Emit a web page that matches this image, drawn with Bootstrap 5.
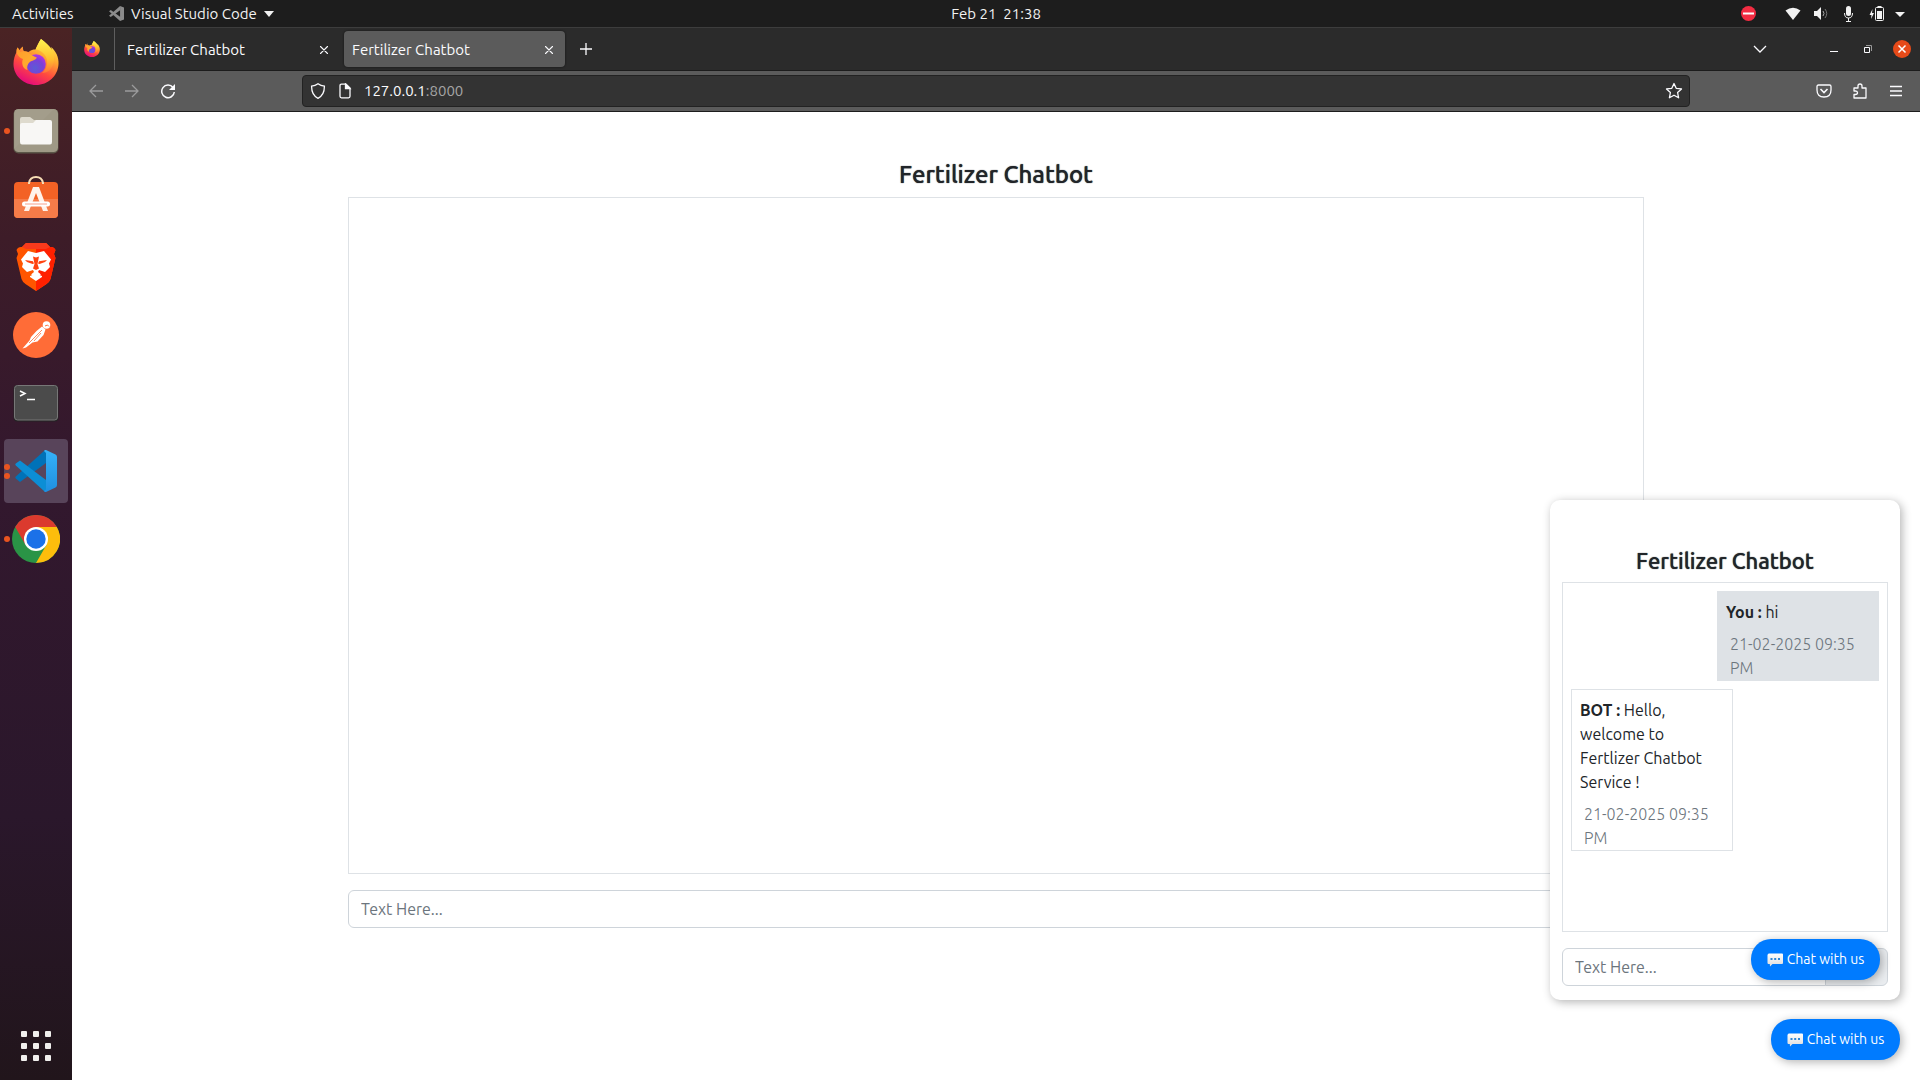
<!DOCTYPE html>
<html lang="en">
<head>
<meta charset="utf-8">
<meta name="viewport" content="width=device-width, initial-scale=1">
<title>Fertilizer Chatbot</title>
<link href="https://cdn.jsdelivr.net/npm/bootstrap@5.3.0/dist/css/bootstrap.min.css" rel="stylesheet">
<style>
  body { font-family: Ubuntu, "Noto Sans", "Open Sans", sans-serif; font-size: 16px; line-height: 24px; color: #212529; }
  svg { display: block; flex: none; }
  button.plain { background: none; border: 0; padding: 0; color: inherit; display: flex; align-items: center; justify-content: center; flex: none; }
  .topbar { height: 28px; background: #1d1d1d; border-bottom: 1px solid #3d3d3d; color: #f2f2f2; font-size: 15px; line-height: 27px; flex: none; }
  .topbar-rest { display: grid; grid-template-columns: 1fr auto 1fr; flex: 1; }
  .activities { width: 72px; padding-left: 12px; white-space: nowrap; }
  .app-menu { padding-left: 37px; gap: 7px; white-space: nowrap; }
  .tray { padding-right: 15px; }
  .dock { width: 72px; flex: none; padding: 3px 4px 2px; gap: 4px; background: linear-gradient(#4a2324, #3d1c28 20%, #33182e 42%, #2a172b 75%, #21151b); }
  .dock-item { width: 64px; height: 64px; border-radius: 4px; position: relative; }
  .dock-item.current { background: #58445a; }
  .dots { position: absolute; left: 0; top: 0; height: 100%; gap: 3px; }
  .dots i { width: 6px; height: 6px; border-radius: 50%; background: #e95420; display: block; }
  .tabstrip { height: 43px; background: #2b2b2b; border-bottom: 1px solid #1c1c1c; color: #fbfbfe; font-size: 15px; padding-right: 1px; }
  .pinned { width: 43px; height: 42px; border-right: 1px solid #5f5f5f; padding-right: 3px; }
  .tab-box { width: 221px; height: 36px; border-radius: 4px; padding: 2px 8px 0; margin-left: 4px; }
  .tab-box.active { background: #5b5b5b; box-shadow: 0 0 2px #111; }
  .tab-box button { width: 16px; height: 16px; }
  .wide-btn { width: 34px; height: 32px; }
  .tabs-menu { margin-right: 40px; }
  .toolbar { height: 41px; background: #5b5b5b; border-bottom: 1px solid #1c1c1c; color: #fbfbfe; padding: 0 6px; }
  .tool-btn { width: 36px; height: 32px; }
  .faded { opacity: .4; }
  .spring { flex: 13 1 0; }
  .urlbar { flex: 154 1 0; height: 32px; background: #333; border: 1px solid #222; border-radius: 4px; font-size: 15px; padding: 0 6px 0 7px; gap: 9px; }
  .urlbar .port { color: #a5a5a5; }
  .page-view { background: #fff; position: relative; overflow: hidden; min-height: 0; }
  .page-title { font-size: 24px; line-height: 29px; font-weight: 500; text-shadow: 0 0 1px #212529; }
  .chat-log { height: calc((100vh - 113px) * .7); border: 1px solid #dee2e6; }
  .form-control, .form-control:focus { font-size: 16px; height: 38px; border-color: #ced4da; }
  .form-control::placeholder { color: #6c757d; }
  .send-btn { width: 63px; background: #e9ecef; border: 1px solid #ced4da; }
  .chat-panel { position: absolute; z-index: 10; right: 20px; bottom: 80px; width: 350px; height: 500px; background: #fff; border-radius: 10px; box-shadow: 2px 2px 10px rgba(0,0,0,.3); padding: 48px 12px 0; }
  .chat-panel .page-title { font-size: 22px; line-height: 26px; }
  .panel-log { height: 350px; border: 1px solid #dee2e6; padding: 8px 0; gap: 8px; }
  .bubble { border: 1px solid #dee2e6; padding: 8px 8px 0; }
  .bubble.mine { background: #dee2e6; }
  .stamp { color: #6c757d; font-weight: 300; }
  .chat-btn { position: absolute; z-index: 10; right: 20px; bottom: 20px; height: 41px; width: 129px; border: 0; border-radius: 20px; background: #007bff; color: #fff; font-size: 14px; line-height: 21px; box-shadow: 2px 2px 10px rgba(0,0,0,.3); gap: 4px; white-space: nowrap; }
</style>
<script src="https://cdn.jsdelivr.net/npm/bootstrap@5.3.0/dist/js/bootstrap.bundle.min.js"></script>
</head>
<body class="d-flex flex-column vh-100 overflow-hidden">
<svg width="0" height="0" class="position-absolute" aria-hidden="true">
  <defs>
    <linearGradient id="ffBody" x1=".8" y1="0" x2=".3" y2="1"><stop offset="0" stop-color="#fff44f"/><stop offset=".35" stop-color="#ffa930"/><stop offset=".65" stop-color="#ff4a3f"/><stop offset="1" stop-color="#e3067f"/></linearGradient>
    <linearGradient id="ffFlame" x1=".5" y1="0" x2=".5" y2="1"><stop offset="0" stop-color="#fff44f"/><stop offset=".6" stop-color="#ffbd2f"/><stop offset="1" stop-color="#ff7139"/></linearGradient>
    <radialGradient id="ffGlobe" cx=".45" cy=".7" r=".7"><stop offset="0" stop-color="#5b5bd6"/><stop offset=".6" stop-color="#7b40d8"/><stop offset="1" stop-color="#b833e1"/></radialGradient>
    <linearGradient id="ffFox" x1="0" y1="0" x2="1" y2="1"><stop offset="0" stop-color="#ff9a2b"/><stop offset=".6" stop-color="#ffab2e"/><stop offset="1" stop-color="#ff7a35"/></linearGradient>
    <symbol id="firefox" viewBox="0 0 46 46">
      <path d="M28 0c5 3.500 8 7.500 9.500 11.500C39 11 38.500 9 38 8c5 4 8 10.500 7.500 17C45 37 35 46 23 46S.5 37 .5 25C.5 20 2 16 3.500 13c0-1.500.2-3 .8-4.500 1 .8 1.700 1.800 2.200 2.800C7.500 9.500 8.500 8.500 10 7.500c-.3 2 .2 3.500 1 4.700 1.500-.1 3 .1 4.500.7C18 11 20 10.500 22.500 10.500 24 7 25.500 4 28 0z" fill="url(#ffBody)"/>
      <circle cx="23" cy="25" r="9.800" fill="url(#ffGlobe)"/>
      <path d="M28 0c8 6 14 11 13 21-1 9-6 13-12 13 6-5 7-13 2-19-3-3.500-7-5-8.500-4.500C24 7 25.500 4 28 0z" fill="url(#ffFlame)"/>
      <path d="M4.300 8.500c2 1.500 2.700 3.500 3 4.500 3-1.500 6.500-1 9 1.500 2 1.500 5 3 7.500 4-1 3-5 3-7 4.500-2.500 2-3 5-2.300 8C10 30 8 24 10 20c-3-1-6-4-6.500-7 0-1.500.2-3 .8-4.500z" fill="url(#ffFox)"/>
    </symbol>
    <linearGradient id="vsRight" x1="0" y1="0" x2="0" y2="1"><stop offset="0" stop-color="#35b2f8"/><stop offset="1" stop-color="#1f8fe0"/></linearGradient>
    <symbol id="close" viewBox="0 0 16 16"><path d="M4.500 4.500l7 7M11.500 4.500l-7 7" stroke="currentColor" stroke-width="1.100" stroke-linecap="round"/></symbol>
    <linearGradient id="bubbleGrad" x1="0" y1="0" x2="0" y2="1"><stop offset="0" stop-color="#fff"/><stop offset="1" stop-color="#dcdcdc"/></linearGradient>
    <symbol id="speech" viewBox="0 0 16 14"><path d="M1 1.500Q1 .5 2 .5h13q1 0 1 1v8.500q0 1-1 1H5.500L3 13.500 2.800 11H1.500q-1 0-1-1V1.500z" fill="url(#bubbleGrad)"/><path d="M3.500 5h2v2h-2zM7.200 5h2v2h-2zM11 5h2v2h-2z" fill="#2f86d6"/></symbol>
  </defs>
</svg>

<header class="topbar d-flex">
  <div class="activities">Activities</div>
  <div class="topbar-rest">
    <div class="app-menu d-flex align-items-center">
      <svg width="15" height="15" viewBox="0 0 42 42" fill="#8b8b8b"><path d="M31 0l11 4v34l-11 4L0 15l5-4 26 19z"/><path d="M31 0v12L5 31l-5-4z"/></svg>
      <span>Visual Studio Code</span>
      <svg width="10" height="6" viewBox="0 0 10 6" fill="#f2f2f2"><path d="M0 0h10L5 6z"/></svg>
    </div>
    <div>Feb 21&nbsp; 21:38</div>
    <div class="tray d-flex align-items-center justify-content-end">
      <svg width="165" height="20" viewBox="1740 3 165 20" fill="#f2f2f2" aria-label="System status">
        <circle cx="1748.500" cy="12.500" r="7.500" fill="#f22c42"/><path d="M1743 11.500h11v2h-11z" fill="#fff"/>
        <path d="M1785.500 9.500Q1793 4 1800.500 9.500L1793 19z"/>
        <path d="M1814 10h3l4-4v13l-4-4h-3z"/><path d="M1823 10q2 2.500 0 5" stroke="#aaa" fill="none"/><path d="M1825 8q3.500 4.500 0 9" stroke="#777" fill="none"/>
        <rect x="1846" y="5" width="5" height="10" rx="2.500"/><path d="M1844.500 12q0 5 4 5t4-5M1848.500 17v4M1846 20.500h5" stroke="#f2f2f2" fill="none"/>
        <path d="M1872.500 8l-3 6h2l-.5 4 3-6h-2z"/><path d="M1877.500 5h4v2h-4z"/><rect x="1875.500" y="6.500" width="8" height="13" rx="1" fill="none" stroke="#f2f2f2"/><path d="M1877 10h5v8h-5z"/>
        <path d="M1895 11h10l-5 5z"/>
      </svg>
    </div>
  </div>
</header>

<div class="d-flex flex-fill" style="min-height:0">
  <nav class="dock d-flex flex-column" aria-label="Dock">
    <div class="dock-item d-flex align-items-center justify-content-center"><svg width="46" height="48" viewBox="0 0 46 48"><use href="#firefox" width="46" height="46"/></svg></div>
    <div class="dock-item d-flex align-items-center justify-content-center">
      <span class="dots d-flex flex-column justify-content-center"><i></i></span>
      <svg width="46" height="46" viewBox="0 0 46 46"><rect x=".5" y="1" width="45" height="44.500" rx="5" fill="#5b5648"/><rect x="1" y="1" width="44" height="43" rx="4.500" fill="#9f9986"/><path d="M2 2h38L2 40z" fill="#a8a28f" opacity=".5"/><path d="M7 11q0-2 2-2h8l4 3h3v8H7z" fill="#dedacd"/><path d="M7 17q0-2 2-2h11l3-3h14q2 0 2 2v20q0 2.500-2 2.500H9q-2 0-2-2.500z" fill="#f8f7f5"/></svg>
    </div>
    <div class="dock-item d-flex align-items-center justify-content-center">
      <svg width="46" height="46" viewBox="0 2 46 46"><rect x="1" y="8" width="44" height="36" rx="4" fill="#f36225"/><path d="M1 25h44v15q0 4-4 4H5q-4 0-4-4z" fill="#f57c49"/><path d="M16 10V9q1-6 7-6t7 6v1" fill="none" stroke="#f7ddb5" stroke-width="2"/><path d="M20 13h6l9 24h-5l-7-18-7 18h-5z" fill="#fff2ea"/><rect x="9" y="27.500" width="28" height="5" rx="2.500" fill="#fff"/><path d="M12 30h22" stroke="#f7a08a"/></svg>
    </div>
    <div class="dock-item d-flex align-items-center justify-content-center">
      <svg width="40" height="48" viewBox="0 0 40 48"><path d="M10 0h20l4 4q4-.5 5.500 3L38 11l1.500 4-5 21q-1 3-4 5L20 48 9.500 41q-3-2-4-5L.5 15 2 11 .5 7Q2 3.500 6 4z" fill="#ff5500"/><path d="M20 0h10l4 4q4-.5 5.500 3L38 11l1.500 4-5 21q-1 3-4 5L20 48z" fill="#ff2000"/><path d="M10 0h20l4 4-4 2H10L6 4z" fill="#f83a1c"/><path d="M12 8l8 2 8-2 7 8.500-2 4 1 3.500-5 5-6-2-1 2 3 2.500-5 2-5-2 3-2.500-1-2-6 2-5-5 1-3.500-2-4z" fill="#fff"/><path d="M14 33l6-2.500 6 2.500v1l-6 4-6-4z" fill="#fff"/><path d="M9 17l8 1.200 1 2.300-1.500.5L11 19zM31 17l-8 1.200-1 2.300 1.500.5L29 19zM17 13.500l3 1 3-1-1.500 7.500L23 25.500l-3 1.500-3-1.500 1.500-4.500z" fill="#ff4310"/></svg>
    </div>
    <div class="dock-item d-flex align-items-center justify-content-center">
      <svg width="46" height="46" viewBox="0 0 46 46"><circle cx="23" cy="23" r="23" fill="#ff6c37"/><circle cx="33.500" cy="13" r="3.800" fill="#fff"/><path d="M32 14l2.500-1 1.500 1.500" stroke="#ff6c37" fill="none"/><path d="M29 14.500l3.500 3-2 5.500-6 6.500-5 1-6.500 5-3.500 1 7-8 1.500-3.500 5.500-6z" fill="#fff"/><path d="M29 18L16 31m12-10-7 8" stroke="#ff6c37" stroke-width=".8"/></svg>
    </div>
    <div class="dock-item d-flex align-items-center justify-content-center">
      <svg width="46" height="38" viewBox="0 0 46 38"><rect x=".5" y="1" width="45" height="36.500" rx="4" fill="#242424"/><rect x="1.500" y="1.500" width="43" height="34.500" rx="3" fill="#4b4b4b" stroke="#777"/><path d="M7 7l5 2.500L7 12M14 15.500h8" fill="none" stroke="#fff" stroke-width="1.500"/></svg>
    </div>
    <div class="dock-item current d-flex align-items-center justify-content-center">
      <span class="dots d-flex flex-column justify-content-center"><i></i><i></i></span>
      <svg width="42" height="42" viewBox="0 0 42 42"><path d="M31 0v13L5 32 .8 28.500q-1-1 0-2L29 1z" fill="#0072b8"/><path d="M31 42V30L5 10.500.8 13.500q-1 1 0 2L29 41z" fill="#0c8ed5"/><path d="M31 0l9.500 4.500Q42 5.200 42 7v28q0 1.800-1.500 2.500L31 42q-1 .3-2-1l2-1.500V3L29 1q1-1.300 2-1z" fill="url(#vsRight)"/></svg>
    </div>
    <div class="dock-item d-flex align-items-center justify-content-center">
      <span class="dots d-flex flex-column justify-content-center"><i></i></span>
      <svg width="48" height="48" viewBox="0 0 48 48"><circle cx="24" cy="24" r="24" fill="#2a9446"/><path d="M24 12h20.800A24 24 0 0 1 24 48l10.400-18z" fill="#fdbd0c"/><path d="M3.200 12A24 24 0 0 1 44.800 12H24L13.600 30z" fill="#db3a2e"/><circle cx="24" cy="24" r="12" fill="#fff"/><circle cx="24" cy="24" r="9.700" fill="#1b71e8"/></svg>
    </div>
    <div class="dock-item mt-auto d-flex align-items-center justify-content-center">
      <svg width="30" height="30" viewBox="0 0 30 30" fill="#f0efed"><g id="dotRow"><rect width="6" height="6" rx="1" y="0"/><rect x="12" width="6" height="6" rx="1"/><rect x="24" width="6" height="6" rx="1"/></g><use href="#dotRow" y="12"/><use href="#dotRow" y="24"/></svg>
    </div>
  </nav>

  <div class="d-flex flex-column flex-fill" style="min-width:0">
    <div class="tabstrip d-flex align-items-center flex-shrink-0">
      <div class="pinned d-flex align-items-center justify-content-center"><svg width="16" height="16"><use href="#firefox"/></svg></div>
      <div class="tab-box ms-1 d-flex align-items-center justify-content-between"><span>Fertilizer Chatbot</span><button class="plain" aria-label="Close tab"><svg width="16" height="16"><use href="#close"/></svg></button></div>
      <div class="tab-box active d-flex align-items-center justify-content-between"><span>Fertilizer Chatbot</span><button class="plain" aria-label="Close tab"><svg width="16" height="16"><use href="#close"/></svg></button></div>
      <button class="plain wide-btn ms-1" aria-label="New tab"><svg width="14" height="14" viewBox="0 0 14 14"><path d="M7 1v12M1 7h12" stroke="currentColor" stroke-width="1.300"/></svg></button>
      <button class="plain wide-btn tabs-menu ms-auto" aria-label="List all tabs"><svg width="14" height="8" viewBox="0 0 14 8" fill="none"><path d="M1 1l6 6 6-6" stroke="currentColor" stroke-width="1.300"/></svg></button>
      <button class="plain wide-btn" aria-label="Minimize"><svg width="10" height="10" viewBox="0 0 10 10"><path d="M1 7h8v1H1z" fill="currentColor"/></svg></button>
      <button class="plain wide-btn" aria-label="Restore"><svg width="10" height="10" viewBox="0 0 10 10" fill="none"><path d="M1.500 3.500h5v5h-5z" stroke="currentColor"/><path d="M3 1.500h5.500V7" stroke="#999"/></svg></button>
      <button class="plain wide-btn" aria-label="Close window"><svg width="18" height="18" viewBox="0 0 18 18"><circle cx="9" cy="9" r="9" fill="#e64a19"/><path d="M5.500 5.500l7 7m0-7l-7 7" stroke="#fff" stroke-width="1.500"/></svg></button>
    </div>

    <div class="toolbar d-flex align-items-center flex-shrink-0">
      <button class="plain tool-btn faded" aria-label="Back"><svg width="16" height="16" viewBox="0 0 16 16" fill="none" stroke="currentColor" stroke-width="1.300"><path d="M15 8H2m6-6L2 8l6 6"/></svg></button>
      <button class="plain tool-btn faded" aria-label="Forward"><svg width="16" height="16" viewBox="0 0 16 16" fill="none" stroke="currentColor" stroke-width="1.300"><path d="M1 8h13M8 2l6 6-6 6"/></svg></button>
      <button class="plain tool-btn" aria-label="Reload"><svg width="16" height="16" viewBox="0 0 16 16" fill="none" stroke="currentColor" stroke-width="1.500"><path d="M13 4.500A6.300 6.300 0 1 0 14.300 9"/><path d="M15 1v6H9z" fill="currentColor" stroke="none"/></svg></button>
      <div class="spring"></div>
      <div class="urlbar d-flex align-items-center">
        <svg width="16" height="16" viewBox="0 0 16 16" fill="none" stroke="currentColor" stroke-width="1.300"><path d="M8 .8c2 1.500 4 2.200 6.400 2.400C14.500 9 13 13 8 15.300 3 13 1.500 9 1.600 3.200 4 3 6 2.300 8 .8z"/></svg>
        <svg width="20" height="16" viewBox="0 0 20 16" fill="none" stroke="currentColor" stroke-width="1.300"><path d="M11 1.200H6.500Q5 1.200 5 2.700v10.600q0 1.500 1.500 1.500h7q1.500 0 1.500-1.500V5z"/><path d="M10.500 1v4.500H15z" fill="currentColor"/></svg>
        <span class="flex-fill">127.0.0.1<span class="port">:8000</span></span>
        <button class="plain" aria-label="Bookmark this page"><svg width="18" height="18" viewBox="0 0 18 18" fill="none" stroke="currentColor" stroke-width="1.300" stroke-linejoin="round"><path d="M9 1.500l2.200 4.800 5.300.6-3.900 3.600 1 5.300L9 13.200l-4.600 2.600 1-5.300L1.500 6.900l5.300-.6z"/></svg></button>
      </div>
      <div class="spring"></div>
      <button class="plain tool-btn" aria-label="Save to Pocket"><svg width="16" height="16" viewBox="0 0 16 16" fill="none" stroke="currentColor" stroke-width="1.300"><path d="M2.500 2h11q1.500 0 1.500 1.500V7q0 7-7 7T1 7V3.500Q1 2 2.500 2z"/><path d="M4.500 6L8 9.500 11.500 6" stroke-width="1.600"/></svg></button>
      <button class="plain tool-btn" aria-label="Extensions"><svg width="16" height="16" viewBox="0 0 16 16" fill="none" stroke="currentColor" stroke-width="1.300" stroke-linejoin="round"><path d="M2 5h4V3q0-2 2-2t2 2v2h4v10H2v-3.500h1.500q2 0 2-1.700t-2-1.800H2z"/></svg></button>
      <button class="plain tool-btn" aria-label="Open menu"><svg width="14" height="14" viewBox="0 0 14 14"><path d="M1 2.500h12M1 7h12M1 11.500h12" stroke="currentColor" stroke-width="1.300"/></svg></button>
    </div>

    <main class="page-view flex-fill">
      <div class="container h-100 pt-5">
        <h1 class="page-title text-center mb-2">Fertilizer Chatbot</h1>
        <div class="chat-log mb-3"></div>
        <div class="input-group">
          <input type="text" class="form-control" placeholder="Text Here..." aria-label="Message">
          <button class="btn send-btn" aria-label="Send"></button>
        </div>
      </div>

      <section class="chat-panel" aria-label="Chat">
        <h2 class="page-title text-center mb-2">Fertilizer Chatbot</h2>
        <div class="panel-log d-flex flex-column mb-3">
          <div class="bubble mine w-50 mx-2 align-self-end">
            <div class="mb-2"><b>You :</b> hi</div>
            <div class="stamp ms-1">21-02-2025 09:35 PM</div>
          </div>
          <div class="bubble w-50 mx-2">
            <div class="mb-2"><b>BOT :</b> Hello, welcome to Fertlizer Chatbot Service !</div>
            <div class="stamp ms-1">21-02-2025 09:35 PM</div>
          </div>
        </div>
        <div class="input-group">
          <input type="text" class="form-control" placeholder="Text Here..." aria-label="Message">
          <button class="btn send-btn" aria-label="Send"></button>
        </div>
        <button class="chat-btn d-flex align-items-center justify-content-center"><svg width="16" height="14"><use href="#speech"/></svg>Chat with us</button>
      </section>
      <button class="chat-btn d-flex align-items-center justify-content-center"><svg width="16" height="14"><use href="#speech"/></svg>Chat with us</button>
    </main>
  </div>
</div>
</body>
</html>
